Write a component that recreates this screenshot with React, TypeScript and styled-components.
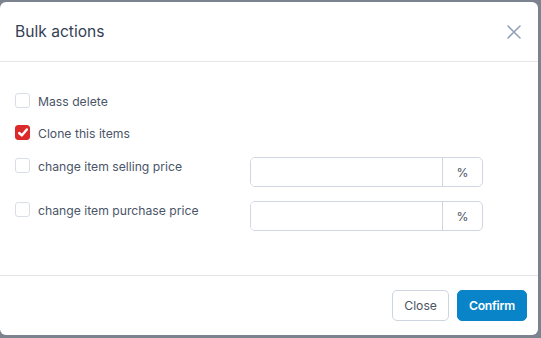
import React from 'react'
import styled, { createGlobalStyle } from 'styled-components'

const GlobalStyle = createGlobalStyle`
    html, body {
        margin: 0;
        padding: 0;
        background: #7d838e;
        font-family: Inter, "Noto Sans", sans-serif;
    }
`

const Page = styled.div`
    width: 541px;
    height: 338px;
    padding-top: 2px;
    box-sizing: border-box;
    overflow: hidden;
`

const Modal = styled.div`
    width: 538px;
    height: 333px;
    background: #fff;
    border-radius: 6px;
    display: flex;
    flex-direction: column;
    overflow: hidden;
`

const Header = styled.div`
    height: 59px;
    border-bottom: 1px solid #e3e5e8;
    display: flex;
    align-items: center;
    justify-content: space-between;
    padding: 0 17px 0 15px;
`

const Title = styled.h5`
    margin: 0;
    font-size: 15.6px;
    font-weight: 400;
    color: #344154;
`

const CloseX = styled.button`
    border: 0;
    background: none;
    padding: 0;
    width: 15px;
    height: 15px;
    display: flex;
    align-items: center;
    justify-content: center;
    cursor: pointer;
`

const Body = styled.div`
    flex: 1;
    padding: 31px 15px 0 15px;
    display: flex;
    flex-direction: column;
    gap: 14px;
`

const Row = styled.div`
    display: grid;
    grid-template-columns: 235px 233px;
    align-items: start;
    min-height: 18px;
`

const Check = styled.label<{ $nudge?: boolean }>`
    display: flex;
    align-items: flex-start;
    gap: 8px;
    font-size: 12.2px;
    color: #4a5568;
    line-height: 17px;
    margin-top: ${p => (p.$nudge ? '1px' : '0')};
`

const Box = styled.span<{ $on?: boolean }>`
    width: 15px;
    height: 15px;
    flex: none;
    box-sizing: border-box;
    border-radius: 3px;
    border: 1px solid ${p => (p.$on ? '#dc2a2a' : '#d9dee6')};
    background: ${p => (p.$on ? '#dc2a2a' : '#fff')};
    display: flex;
    align-items: center;
    justify-content: center;
`

const InputGroup = styled.div`
    display: flex;
    height: 30px;
    border: 1px solid #cfd6e0;
    border-radius: 5px;
    box-sizing: border-box;
    overflow: hidden;
`

const Field = styled.input`
    flex: 1;
    min-width: 0;
    border: 0;
    outline: none;
    padding: 0 10px;
    font: inherit;
    font-size: 12.2px;
`

const Addon = styled.span`
    width: 39px;
    border-left: 1px solid #cfd6e0;
    display: flex;
    align-items: center;
    justify-content: center;
    font-size: 12.2px;
    color: #4b5563;
`

const Footer = styled.div`
    height: 58px;
    border-top: 1px solid #e3e5e8;
    display: flex;
    align-items: center;
    justify-content: flex-end;
    gap: 8px;
    padding: 0 11px 1px 0;
`

const Button = styled.button<{ $primary?: boolean }>`
    height: 31px;
    padding: 0 11px;
    border-radius: 5px;
    font-family: Inter, "Noto Sans", sans-serif;
    font-size: 12.2px;
    font-weight: ${p => (p.$primary ? 600 : 400)};
    letter-spacing: ${p => (p.$primary ? '-0.25px' : '0')};
    border: 1px solid ${p => (p.$primary ? '#0a84c8' : '#cdd5e0')};
    background: ${p => (p.$primary ? '#0a84c8' : '#fff')};
    color: ${p => (p.$primary ? '#fff' : '#4b5563')};
    cursor: pointer;
`

const options = [
    { label: 'Mass delete', checked: false, input: false },
    { label: 'Clone this items', checked: true, input: false },
    { label: 'change item selling price', checked: false, input: true },
    { label: 'change item purchase price', checked: false, input: true },
]

const App = () => {
    return (
        <Page>
            <GlobalStyle />
            <Modal>
                <Header>
                    <Title>Bulk actions</Title>
                    <CloseX aria-label="Close">
                        <svg width="14" height="14" viewBox="0 0 14 14">
                            <path d="M1 1L13 13M13 1L1 13" stroke="#94a3b8" strokeWidth="1.6" strokeLinecap="round" />
                        </svg>
                    </CloseX>
                </Header>
                <Body>
                    {options.map(o => (
                        <Row key={o.label}>
                            <Check $nudge={o.input}>
                                <Box $on={o.checked}>
                                    {o.checked &&
                                        <svg width="10" height="9" viewBox="0 0 10 9">
                                            <path d="M1.2 5L3.8 7.4L8.8 1.4" stroke="#fff" strokeWidth="2.4" fill="none" strokeLinecap="round" strokeLinejoin="round" />
                                        </svg>
                                    }
                                </Box>
                                {o.label}
                            </Check>
                            {o.input &&
                                <InputGroup>
                                    <Field type="text" />
                                    <Addon>%</Addon>
                                </InputGroup>
                            }
                        </Row>
                    ))}
                </Body>
                <Footer>
                    <Button>Close</Button>
                    <Button $primary>Confirm</Button>
                </Footer>
            </Modal>
        </Page>
    )
}

export default App
